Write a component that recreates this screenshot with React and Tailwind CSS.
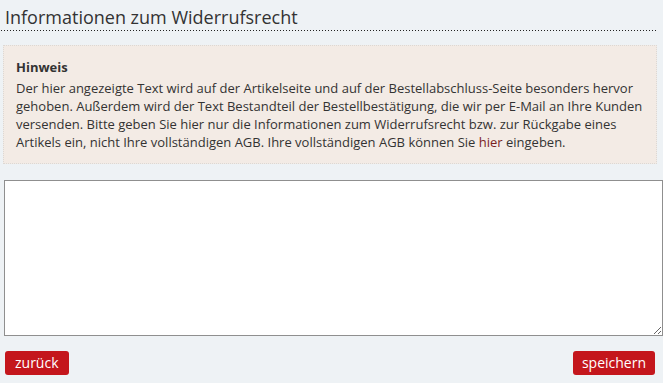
export default function App() {
  return (
    <div className="w-[663px] h-[383px] bg-[#eef2f5] text-[#333] overflow-hidden" style={{ fontFamily: '"Open Sans", sans-serif' }}>
      <div className="pl-[1px] w-[658px]">
        <h1 className="text-[18px] leading-[24px] pt-[5px] pl-[4px] pb-[1px] text-[#333] font-normal">
          Informationen zum Widerrufsrecht
        </h1>
        <div className="h-[1px] bg-[linear-gradient(to_right,#222_1px,transparent_1px)] bg-[length:3px_1px] bg-repeat-x" />
      </div>
      <div className="ml-[3px] mt-[14px] w-[654px] bg-[#f3ebe5] border border-dotted border-[#dcd8d4] px-[12px] pt-[12px] pb-[12px]">
        <div className="text-[13px] leading-[18px] font-bold">Hinweis</div>
        <p className="text-[13px] leading-[18px] mt-[3px]">
          Der hier angezeigte Text wird auf der Artikelseite und auf der Bestellabschluss-Seite besonders hervor gehoben. Außerdem wird der Text Bestandteil der Bestellbestätigung, die wir per E-Mail an Ihre Kunden versenden. Bitte geben Sie hier nur die Informationen zum Widerrufsrecht bzw. zur Rückgabe eines Artikels ein, nicht Ihre vollständigen AGB. Ihre vollständigen AGB können Sie <a className="text-[#7a1f1f]">hier</a> eingeben.
        </p>
      </div>
      <div className="ml-[4px] mt-[16px]">
        <textarea className="block w-[659px] h-[156px] bg-white border border-[#8f8f8f] resize-y outline-none" />
      </div>
      <div className="flex justify-between mt-[15px] pl-[5px] w-[655px]">
        <button className="h-[24px] px-[10px] bg-[#c4161c] text-white text-[14px] leading-[24px] rounded-[3px]">zurück</button>
        <button className="h-[24px] px-[9px] bg-[#c4161c] text-white text-[14px] leading-[24px] rounded-[3px]">speichern</button>
      </div>
    </div>
  );
}
